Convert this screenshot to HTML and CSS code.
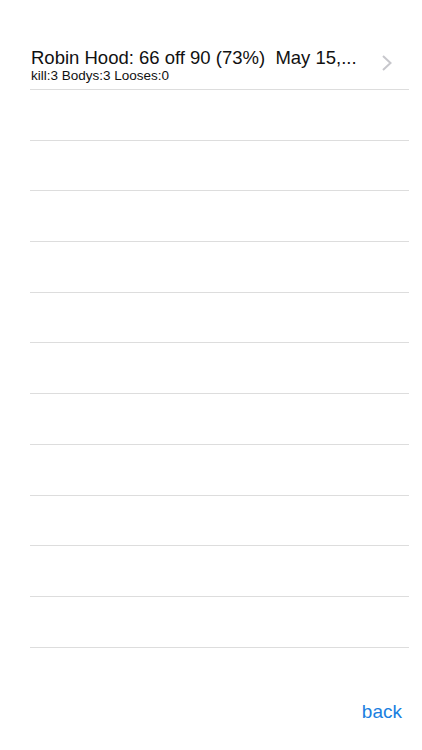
FILE: index.html
```html
<!DOCTYPE html>
<html lang="en">

<head>
  <meta charset="utf-8">
  <meta name="viewport" content="width=device-width, initial-scale=1">
  <title>Scores</title>
  <link rel="stylesheet" href="styles.css">
</head>

<body>
  <div id="screen">
    <ul id="scorelist">
      <li class="row first">
        <div class="rowtext">
          <div class="rowtitle">Robin Hood: 66 off 90 (73%)&nbsp; May 15,...</div>
          <div class="rowsub">kill:3 Bodys:3 Looses:0</div>
        </div>
        <svg class="chevron" width="12" height="18" viewBox="0 0 12 18">
          <path d="M2 2 L9.5 9 L2 16" fill="none" stroke="#c7c7cc" stroke-width="2" />
        </svg>
      </li>
      <li class="row"></li>
      <li class="row"></li>
      <li class="row"></li>
      <li class="row"></li>
      <li class="row"></li>
      <li class="row"></li>
      <li class="row"></li>
      <li class="row"></li>
      <li class="row"></li>
      <li class="row"></li>
      <li class="row"></li>
    </ul>
    <div id="bottombar">
      <a id="backlink" href="#">back</a>
    </div>
  </div>
</body>

</html>
```

FILE: styles.css
```css
html {
  background-color: #ffffff;
  color: #000000;
}

body {
  margin: 0;
  font-family: "Liberation Sans", Arial, sans-serif;
}

#screen {
  width: 422px;
  height: 750px;
  display: flex;
  flex-direction: column;
}

#scorelist {
  list-style-type: none;
  margin: 0;
  padding: 40px 13px 0 30px;
}

.row {
  box-sizing: border-box;
  height: 50.7px;
  border-bottom: 1px solid #dddddd;
  display: flex;
  align-items: center;
}

.first {
  height: 50px;
  align-items: flex-start;
  padding-top: 8px;
}

.rowtext {
  flex: 1;
  padding-left: 1px;
}

.rowtitle {
  font-size: 18.5px;
  line-height: 20px;
  color: #111111;
}

.rowsub {
  font-size: 13.5px;
  line-height: 16px;
  color: #111111;
}

.chevron {
  margin-top: 6px;
  margin-right: 16px;
}

#bottombar {
  margin-top: auto;
  display: flex;
  justify-content: flex-end;
  padding: 0 20px 27px 0;
}

#backlink {
  color: #1a7fe0;
  text-decoration: none;
  font-size: 19px;
  line-height: 22px;
}
```
